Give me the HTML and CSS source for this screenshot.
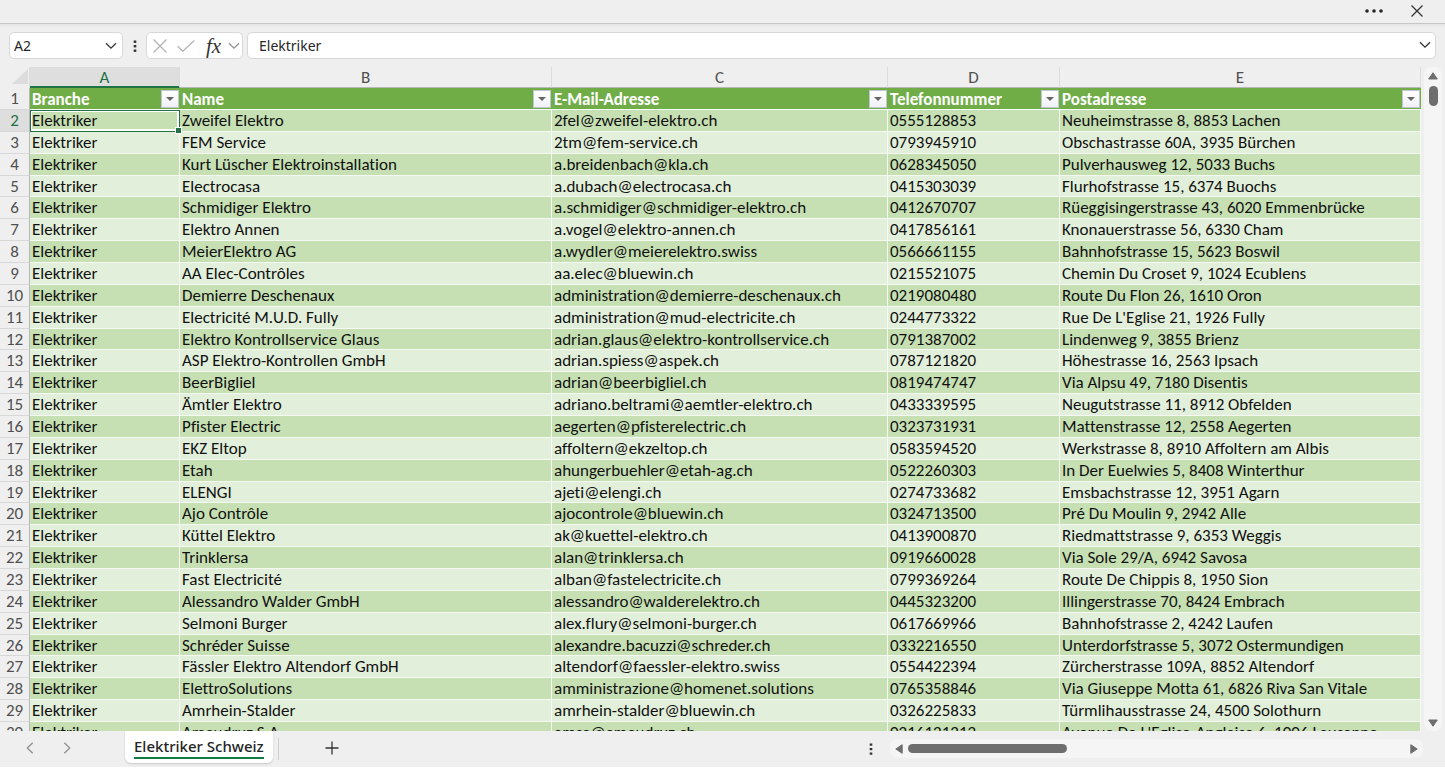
FILE: index.html
```html
<!DOCTYPE html>
<html lang="de">
<head>
<meta charset="utf-8">
<title>Elektriker Schweiz</title>
<link rel="stylesheet" href="styles.css">
</head>
<body>
<div class="app">
  <header class="titlebar">
    <button class="icon-btn" aria-label="Mehr"><svg width="20" height="6" viewBox="0 0 20 6"><g fill="#262626"><circle cx="3" cy="3" r="1.8"/><circle cx="10" cy="3" r="1.8"/><circle cx="17" cy="3" r="1.8"/></g></svg></button>
    <button class="icon-btn" aria-label="Schliessen"><svg width="12" height="12" viewBox="0 0 12 12"><path d="M.5.5l11 11M11.5.5l-11 11" class="stroke"/></svg></button>
  </header>

  <div class="formula-row">
    <div class="box name-box">
      <input class="name-input" aria-label="Namenfeld" value="A2">
      <button class="icon-btn" aria-label="Namen anzeigen"><svg width="12" height="8" viewBox="0 0 12 8"><path d="M1 1.2l5 5 5-5" class="stroke"/></svg></button>
    </div>
    <svg class="grip" width="4" height="14" viewBox="0 0 4 14"><g fill="#333"><rect x=".7" y="1.5" width="2.6" height="2.4"/><rect x=".7" y="6" width="2.6" height="2.4"/><rect x=".7" y="10.5" width="2.6" height="2.4"/></g></svg>
    <div class="box fx-box">
      <button class="icon-btn" aria-label="Abbrechen"><svg width="14" height="14" viewBox="0 0 14 14"><path d="M.5.5l13 13M13.5.5l-13 13" class="stroke pale"/></svg></button>
      <button class="icon-btn" aria-label="Eingeben"><svg width="18" height="12" viewBox="0 0 18 12"><path d="M.6 6.2l5.2 5L17.4.6" class="stroke pale"/></svg></button>
      <button class="icon-btn fx" aria-label="Funktion einfügen">fx</button>
      <button class="icon-btn" aria-label="Funktionen"><svg width="12" height="8" viewBox="0 0 12 8"><path d="M1 1.2l5 5 5-5" class="stroke mid"/></svg></button>
    </div>
    <div class="box formula-box">
      <input class="formula-input" aria-label="Bearbeitungsleiste" value="Elektriker">
      <button class="icon-btn" aria-label="Erweitern"><svg width="12" height="10" viewBox="0 0 12 10"><path d="M1 1.2l5 5 5-5" class="stroke"/></svg></button>
    </div>
  </div>

  <main class="sheet">
    <div class="grid">
      <table class="cells">
        <colgroup><col class="c-num"><col class="c-a"><col class="c-b"><col class="c-c"><col class="c-d"><col></colgroup>
        <thead>
          <tr class="letters"><th><svg class="corner" width="16" height="16" viewBox="0 0 16 16"><path d="M16 0v15H0z" fill="#dcdcdc"/></svg></th><th class="active">A</th><th>B</th><th>C</th><th>D</th><th>E</th></tr>
          <tr class="fields"><th>1</th>
            <th><div class="field"><span>Branche</span><button class="filter" aria-label="Branche filtern"></button></div></th>
            <th><div class="field"><span>Name</span><button class="filter" aria-label="Name filtern"></button></div></th>
            <th><div class="field"><span>E-Mail-Adresse</span><button class="filter" aria-label="E-Mail-Adresse filtern"></button></div></th>
            <th><div class="field"><span>Telefonnummer</span><button class="filter" aria-label="Telefonnummer filtern"></button></div></th>
            <th><div class="field"><span>Postadresse</span><button class="filter" aria-label="Postadresse filtern"></button></div></th></tr>
        </thead>
        <tbody>
          <tr><th class="active">2</th><td class="selected">Elektriker</td><td>Zweifel Elektro</td><td>2fel@zweifel-elektro.ch</td><td>0555128853</td><td>Neuheimstrasse 8, 8853 Lachen</td></tr>
          <tr><th>3</th><td>Elektriker</td><td>FEM Service</td><td>2tm@fem-service.ch</td><td>0793945910</td><td>Obschastrasse 60A, 3935 Bürchen</td></tr>
          <tr><th>4</th><td>Elektriker</td><td>Kurt Lüscher Elektroinstallation</td><td>a.breidenbach@kla.ch</td><td>0628345050</td><td>Pulverhausweg 12, 5033 Buchs</td></tr>
          <tr><th>5</th><td>Elektriker</td><td>Electrocasa</td><td>a.dubach@electrocasa.ch</td><td>0415303039</td><td>Flurhofstrasse 15, 6374 Buochs</td></tr>
          <tr><th>6</th><td>Elektriker</td><td>Schmidiger Elektro</td><td>a.schmidiger@schmidiger-elektro.ch</td><td>0412670707</td><td>Rüeggisingerstrasse 43, 6020 Emmenbrücke</td></tr>
          <tr><th>7</th><td>Elektriker</td><td>Elektro Annen</td><td>a.vogel@elektro-annen.ch</td><td>0417856161</td><td>Knonauerstrasse 56, 6330 Cham</td></tr>
          <tr><th>8</th><td>Elektriker</td><td>MeierElektro AG</td><td>a.wydler@meierelektro.swiss</td><td>0566661155</td><td>Bahnhofstrasse 15, 5623 Boswil</td></tr>
          <tr><th>9</th><td>Elektriker</td><td>AA Elec-Contrôles</td><td>aa.elec@bluewin.ch</td><td>0215521075</td><td>Chemin Du Croset 9, 1024 Ecublens</td></tr>
          <tr><th>10</th><td>Elektriker</td><td>Demierre Deschenaux</td><td>administration@demierre-deschenaux.ch</td><td>0219080480</td><td>Route Du Flon 26, 1610 Oron</td></tr>
          <tr><th>11</th><td>Elektriker</td><td>Electricité M.U.D. Fully</td><td>administration@mud-electricite.ch</td><td>0244773322</td><td>Rue De L'Eglise 21, 1926 Fully</td></tr>
          <tr><th>12</th><td>Elektriker</td><td>Elektro Kontrollservice Glaus</td><td>adrian.glaus@elektro-kontrollservice.ch</td><td>0791387002</td><td>Lindenweg 9, 3855 Brienz</td></tr>
          <tr><th>13</th><td>Elektriker</td><td>ASP Elektro-Kontrollen GmbH</td><td>adrian.spiess@aspek.ch</td><td>0787121820</td><td>Höhestrasse 16, 2563 Ipsach</td></tr>
          <tr><th>14</th><td>Elektriker</td><td>BeerBigliel</td><td>adrian@beerbigliel.ch</td><td>0819474747</td><td>Via Alpsu 49, 7180 Disentis</td></tr>
          <tr><th>15</th><td>Elektriker</td><td>Ämtler Elektro</td><td>adriano.beltrami@aemtler-elektro.ch</td><td>0433339595</td><td>Neugutstrasse 11, 8912 Obfelden</td></tr>
          <tr><th>16</th><td>Elektriker</td><td>Pfister Electric</td><td>aegerten@pfisterelectric.ch</td><td>0323731931</td><td>Mattenstrasse 12, 2558 Aegerten</td></tr>
          <tr><th>17</th><td>Elektriker</td><td>EKZ Eltop</td><td>affoltern@ekzeltop.ch</td><td>0583594520</td><td>Werkstrasse 8, 8910 Affoltern am Albis</td></tr>
          <tr><th>18</th><td>Elektriker</td><td>Etah</td><td>ahungerbuehler@etah-ag.ch</td><td>0522260303</td><td>In Der Euelwies 5, 8408 Winterthur</td></tr>
          <tr><th>19</th><td>Elektriker</td><td>ELENGI</td><td>ajeti@elengi.ch</td><td>0274733682</td><td>Emsbachstrasse 12, 3951 Agarn</td></tr>
          <tr><th>20</th><td>Elektriker</td><td>Ajo Contrôle</td><td>ajocontrole@bluewin.ch</td><td>0324713500</td><td>Pré Du Moulin 9, 2942 Alle</td></tr>
          <tr><th>21</th><td>Elektriker</td><td>Küttel Elektro</td><td>ak@kuettel-elektro.ch</td><td>0413900870</td><td>Riedmattstrasse 9, 6353 Weggis</td></tr>
          <tr><th>22</th><td>Elektriker</td><td>Trinklersa</td><td>alan@trinklersa.ch</td><td>0919660028</td><td>Via Sole 29/A, 6942 Savosa</td></tr>
          <tr><th>23</th><td>Elektriker</td><td>Fast Electricité</td><td>alban@fastelectricite.ch</td><td>0799369264</td><td>Route De Chippis 8, 1950 Sion</td></tr>
          <tr><th>24</th><td>Elektriker</td><td>Alessandro Walder GmbH</td><td>alessandro@walderelektro.ch</td><td>0445323200</td><td>Illingerstrasse 70, 8424 Embrach</td></tr>
          <tr><th>25</th><td>Elektriker</td><td>Selmoni Burger</td><td>alex.flury@selmoni-burger.ch</td><td>0617669966</td><td>Bahnhofstrasse 2, 4242 Laufen</td></tr>
          <tr><th>26</th><td>Elektriker</td><td>Schréder Suisse</td><td>alexandre.bacuzzi@schreder.ch</td><td>0332216550</td><td>Unterdorfstrasse 5, 3072 Ostermundigen</td></tr>
          <tr><th>27</th><td>Elektriker</td><td>Fässler Elektro Altendorf GmbH</td><td>altendorf@faessler-elektro.swiss</td><td>0554422394</td><td>Zürcherstrasse 109A, 8852 Altendorf</td></tr>
          <tr><th>28</th><td>Elektriker</td><td>ElettroSolutions</td><td>amministrazione@homenet.solutions</td><td>0765358846</td><td>Via Giuseppe Motta 61, 6826 Riva San Vitale</td></tr>
          <tr><th>29</th><td>Elektriker</td><td>Amrhein-Stalder</td><td>amrhein-stalder@bluewin.ch</td><td>0326225833</td><td>Türmlihausstrasse 24, 4500 Solothurn</td></tr>
          <tr><th>30</th><td>Elektriker</td><td>Amaudruz S.A.</td><td>amsa@amaudruz.ch</td><td>0216121212</td><td>Avenue De L'Eglise-Anglaise 6, 1006 Lausanne</td></tr>
        </tbody>
      </table>
    </div>
    <div class="vscroll">
      <svg width="10" height="8" viewBox="0 0 10 8"><path d="M5 .8L9.300 7H.7z" class="arrow"/></svg>
      <div class="vthumb"></div>
      <svg class="down" width="10" height="8" viewBox="0 0 10 8"><path d="M5 7.200L.7 1h8.600z" class="arrow"/></svg>
    </div>
  </main>

  <footer class="bottom">
    <nav class="tabs">
      <button class="icon-btn" aria-label="Vorheriges Blatt"><svg width="8" height="12" viewBox="0 0 8 12"><path d="M6.700.8L1.300 6l5.400 5.200" class="stroke mid"/></svg></button>
      <button class="icon-btn next" aria-label="Nächstes Blatt"><svg width="8" height="12" viewBox="0 0 8 12"><path d="M1.300.8L6.700 6l-5.400 5.200" class="stroke mid"/></svg></button>
      <button class="tab"><span class="tab-label">Elektriker Schweiz</span></button>
      <span class="divider"></span>
      <button class="icon-btn add" aria-label="Neues Blatt"><svg width="14" height="14" viewBox="0 0 14 14"><path d="M7 .5v13M.5 7h13" class="stroke"/></svg></button>
    </nav>
    <div class="hpane">
      <svg class="hgrip" width="4" height="14" viewBox="0 0 4 14"><g fill="#333"><rect x=".7" y="1.5" width="2.6" height="2.2"/><rect x=".7" y="6" width="2.6" height="2.2"/><rect x=".7" y="10.5" width="2.6" height="2.2"/></g></svg>
      <div class="hscroll">
        <svg width="8" height="10" viewBox="0 0 8 10"><path d="M.8 5L7.200.7v8.600z" class="arrow"/></svg>
        <div class="htrack"><div class="hthumb"></div></div>
        <svg width="8" height="10" viewBox="0 0 8 10"><path d="M7.200 5L.8.7v8.600z" class="arrow"/></svg>
      </div>
    </div>
  </footer>
</div>
</body>
</html>
```
FILE: styles.css
```css
* { box-sizing: border-box; }
body { margin: 0; background: #fff; }
button, input { border: 0; padding: 0; background: none; font: inherit; color: inherit; }
svg { display: block; flex: none; }

.app {
  display: flex;
  flex-direction: column;
  height: 100vh;
  padding-bottom: 1px;
  background: #fff;
  font: 14px/20px "Noto Sans", sans-serif;
  color: #262626;
}
.icon-btn { display: flex; align-items: center; justify-content: center; }
.stroke { fill: none; stroke: #333; stroke-width: 1.3; }
.stroke.pale { stroke: #b4b4b4; }
.stroke.mid { stroke: #909090; }
.arrow { fill: #6e6e6e; stroke: #6e6e6e; stroke-width: 1; stroke-linejoin: round; }

.titlebar {
  display: flex;
  flex: none;
  align-items: center;
  justify-content: flex-end;
  gap: 27px;
  height: 24px;
  padding: 0 22px 1px 0;
  background: #efefef;
  border-bottom: 1px solid #c6c6c6;
}

.formula-row {
  display: flex;
  flex: none;
  align-items: center;
  height: 43px;
  padding: 0 9px;
  background: linear-gradient(#e4e4e4, #efefef 4px);
}
.box {
  display: flex;
  align-items: center;
  height: 27px;
  background: #fff;
  border: 1px solid #d8d8d8;
  border-radius: 5px;
}
.name-box { width: 114px; padding: 0 5px 0 4px; }
.name-input { flex: 1; min-width: 0; }
.grip { margin: 0 9px 0 10px; }
.fx-box { gap: 10px; width: 97px; padding: 0 2px 0 6px; }
.fx { width: 18px; font: italic 21px/24px "Liberation Serif", serif; color: #333; }
.fx-box .fx + .icon-btn { margin-left: -4px; }
.formula-box { flex: 1; margin-left: 4px; padding: 0 4px 0 11px; }
.formula-input { flex: 1; min-width: 0; }

.sheet { display: flex; flex: 1; min-height: 0; background: #efefef; }
.grid { flex: 1; min-width: 0; overflow: hidden; }
.cells {
  width: 100%;
  table-layout: fixed;
  border-collapse: separate;
  border-spacing: 0;
  font: 17px/20px Carlito, Calibri, Lato, sans-serif;
  font-variant-ligatures: none;
  color: #111;
}
.c-num { width: 30px; }
.c-a { width: 150px; }
.c-b { width: 372px; }
.c-c { width: 336px; }
.c-d { width: 172px; }
.cells th, .cells td { padding: 0; white-space: nowrap; }

.letters th {
  height: 21px;
  font-weight: 400;
  line-height: 19px;
  color: #505050;
  border-right: 1px solid #dcdcdc;
  border-bottom: 1px solid #b8b8b8;
}
.letters th:first-child { border-bottom-color: #efefef; }
.corner { margin-left: 12px; }
.letters .active { background: #dedede; color: #1e7145; box-shadow: inset 0 -1px #217346; border-bottom-color: #217346; }

.fields th { height: 22px; background: #70ad47; }
.field {
  display: flex;
  align-items: center;
  justify-content: space-between;
  height: 22px;
  padding-left: 2px;
  color: #fff;
  border-bottom: 1px solid #fff;
}
.field span { padding-top: 2px; }
.filter {
  display: flex;
  align-items: center;
  justify-content: center;
  width: 18px;
  height: 18px;
  margin-right: 1px;
  background: linear-gradient(#fff, #f0f1f6);
  border: 1px solid #c3c6d2;
}
.filter::before {
  content: "";
  border: 4px solid transparent;
  border-top-color: #666;
  border-bottom-width: 0;
}

.cells tbody th, .fields th:first-child {
  padding-top: 1px;
  background: #efefef;
  font-weight: 400;
  color: #505050;
  border-right: 1px solid #b8b8b8;
  border-bottom: 1px solid #d8d8d8;
}
.cells tbody tr { height: 22px; }
.cells tbody tr:nth-child(7n+4) { height: 21px; line-height: 19px; }
.cells tbody td {
  padding: 1px 0 0 2px;
  border-right: 1px solid #f4f9f1;
  border-bottom: 1px solid #f4f9f1;
  background: #e2efda;
}
.cells tbody tr:nth-child(odd) td { background: #c6e0b4; }
.cells tbody th.active { background: #dedede; color: #1e7145; }
.cells tbody td.selected {
  position: relative;
  border-color: #217346;
  box-shadow: inset 1px 1px #217346, inset 0 0 0 2px #fff;
}
.selected::after {
  content: "";
  position: absolute;
  right: -2px;
  bottom: -2px;
  width: 5px;
  height: 5px;
  background: #217346;
  outline: 1px solid #fff;
}

.vscroll {
  display: flex;
  flex: none;
  flex-direction: column;
  align-items: center;
  gap: 6px;
  width: 18px;
  margin-right: 3px;
  margin-left: 3px;
  padding: 5px 0 4px;
  background: #f5f5f5;
  border-radius: 8px;
}
.vthumb { width: 9px; height: 20px; border-radius: 5px; background: #6e6e6e; }
.down { margin-top: auto; }

.bottom {
  display: flex;
  flex: none;
  height: 36px;
  background: #efefef;
}
.tabs { display: flex; flex: 1; align-items: flex-start; padding-left: 26px; }
.tabs .icon-btn { height: 34px; }
.next { margin-left: 29px; }
.tab {
  display: flex;
  align-items: flex-start;
  height: 32px;
  margin-left: 54px;
  padding: 0 9px;
  background: #fff;
  border-radius: 0 0 6px 6px;
  box-shadow: 0 1px 2px #c8c8c8;
  font-size: 15px;
  font-weight: 500;
}
.tab-label { height: 28px; line-height: 31px; border-bottom: 2px solid #107c41; }
.divider { width: 1px; height: 22px; margin: 7px 0 0 5px; background: #d0d0d0; }
.add { margin-left: 46px; }
.hpane { display: flex; width: 576px; padding: 8px 22px 0 0; }
.hgrip { margin: 3px 17px 0 0; }
.hscroll {
  display: flex;
  flex: 1;
  align-items: center;
  height: 19px;
  padding: 0 5px;
  border-radius: 8px;
  background: #f5f5f5;
}
.htrack { flex: 1; padding: 0 5px; }
.hthumb { width: 32%; height: 9px; border-radius: 5px; background: #6e6e6e; }
```
